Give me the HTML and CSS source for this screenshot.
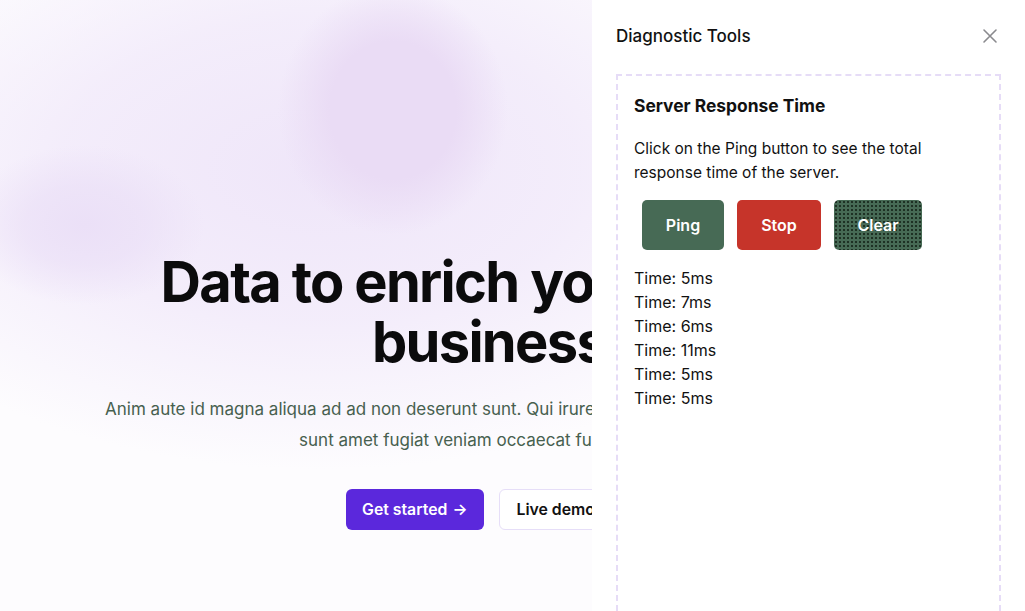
FILE: index.html
```html
<!DOCTYPE html>
<html lang="en">
<head>
<meta charset="utf-8">
<title>Data to enrich your online business</title>
<link rel="stylesheet" href="styles.css">
</head>
<body>
<main class="hero">
  <div class="hero-inner">
    <h1 class="hero-title">Data to enrich your online business</h1>
    <p class="hero-text">Anim aute id magna aliqua ad ad non deserunt sunt. Qui irure qui lorem cupidatat commodo. Elit sunt amet fugiat veniam occaecat fugiat aliqua.</p>
    <div class="hero-actions">
      <a class="btn-primary" href="#">Get started <span class="arrow">&rarr;</span></a>
      <a class="btn-secondary" href="#">Live demo <span class="arrow">&rarr;</span></a>
    </div>
  </div>
</main>

<aside class="panel">
  <header class="panel-head">
    <h2 class="panel-title">Diagnostic Tools</h2>
    <button class="close" aria-label="Close">
      <svg width="16" height="16" viewBox="0 0 16 16" fill="none" stroke="#8a8a8e" stroke-width="1.6" stroke-linecap="round"><path d="M2 2L14 14M14 2L2 14"/></svg>
    </button>
  </header>
  <section class="tool">
    <h3 class="tool-title">Server Response Time</h3>
    <p class="tool-text">Click on the Ping button to see the total response time of the server.</p>
    <div class="tool-buttons">
      <button class="tbtn ping">Ping</button>
      <button class="tbtn stop">Stop</button>
      <button class="tbtn clear">Clear</button>
    </div>
    <ul class="times">
      <li>Time: 5ms</li>
      <li>Time: 7ms</li>
      <li>Time: 6ms</li>
      <li>Time: 11ms</li>
      <li>Time: 5ms</li>
      <li>Time: 5ms</li>
    </ul>
  </section>
</aside>
</body>
</html>
```

FILE: styles.css
```css
* { box-sizing: border-box; }
html, body { margin: 0; padding: 0; }
body {
  font-family: Inter, "Liberation Sans", sans-serif;
  color: #111;
  background: #fdfdfe;
  height: 611px;
  overflow: hidden;
}

.hero {
  height: 611px;
  padding-right: 47px;
  background-color: #fdfcfe;
  background-image:
    radial-gradient(ellipse 115px 125px at 393px 110px, #eadcf5 0%, #eadcf5 55%, rgba(234,220,245,0) 100%),
    radial-gradient(ellipse 120px 80px at 85px 225px, #ebe0f7 0%, rgba(235,224,247,0.7) 50%, rgba(235,224,247,0) 100%),
    radial-gradient(ellipse 520px 300px at 320px 170px, #efe6f9 0%, rgba(241,233,250,0.8) 50%, rgba(253,252,254,0) 100%),
    radial-gradient(ellipse 250px 120px at 80px 20px, rgba(255,255,255,0.9), rgba(255,255,255,0) 100%);
}
.hero-inner {
  width: 840px;
  margin: 0 auto;
  padding-top: 252px;
  display: flex;
  flex-direction: column;
  align-items: center;
  text-align: center;
}
.hero-title {
  margin: 0;
  font-size: 56px;
  line-height: 60px;
  font-weight: 700;
  letter-spacing: -0.03em;
  color: #0b0b0c;
  width: 720px;
}
.hero-text {
  margin: 22px 0 0;
  max-width: 790px;
  font-size: 17px;
  line-height: 31px;
  color: #47604f;
}
.hero-actions {
  margin-top: 33px;
  display: flex;
  gap: 15px;
}
.btn-primary, .btn-secondary {
  display: inline-flex;
  align-items: center;
  height: 41px;
  padding: 0 16.5px;
  border-radius: 6px;
  font-size: 15.8px;
  font-weight: 600;
  text-decoration: none;
}
.btn-primary { background: #5b28dc; color: #fff; }
.btn-secondary { background: #fff; color: #111; border: 1px solid #e6def8; }
.arrow { margin-left: 5px; }

.panel {
  position: fixed;
  top: 0;
  right: 0;
  width: 433px;
  height: 611px;
  background: #fff;
  padding: 22px 24px 0 24px;
  display: flex;
  flex-direction: column;
}
.panel-head {
  display: flex;
  justify-content: space-between;
  align-items: center;
  height: 28px;
}
.panel-title {
  margin: 0;
  font-size: 17px;
  font-weight: 500;
  color: #111;
}
.close {
  background: none;
  border: 0;
  padding: 0;
  margin-right: 3px;
  width: 16px;
  height: 16px;
  display: flex;
}
.tool {
  margin-top: 24px;
  flex: 1;
  border: 2px dashed #e6dcf7;
  border-bottom: 0;
  padding: 16px 16px;
}
.tool-title {
  margin: 0;
  font-size: 17.4px;
  line-height: 28px;
  font-weight: 700;
}
.tool-text {
  margin: 17px 0 0;
  font-size: 15.5px;
  line-height: 24px;
}
.tool-buttons {
  margin-top: 15px;
  padding-left: 8px;
  display: flex;
  gap: 13px;
}
.tbtn {
  height: 50px;
  border: 0;
  border-radius: 5px;
  color: #fff;
  font-family: inherit;
  font-size: 16px;
  font-weight: 600;
  flex: none;
}
.ping { background: #476a55; width: 82px; }
.stop { background: #c6342a; width: 84px; }
.clear {
  width: 88px;
  background-color: #476a55;
  background-image: radial-gradient(circle, #1c2e22 0.7px, transparent 0.9px);
  background-size: 4px 4px;
}
.times {
  list-style: none;
  margin: 16px 0 0;
  padding: 0;
  font-size: 16px;
  line-height: 24px;
}
```
